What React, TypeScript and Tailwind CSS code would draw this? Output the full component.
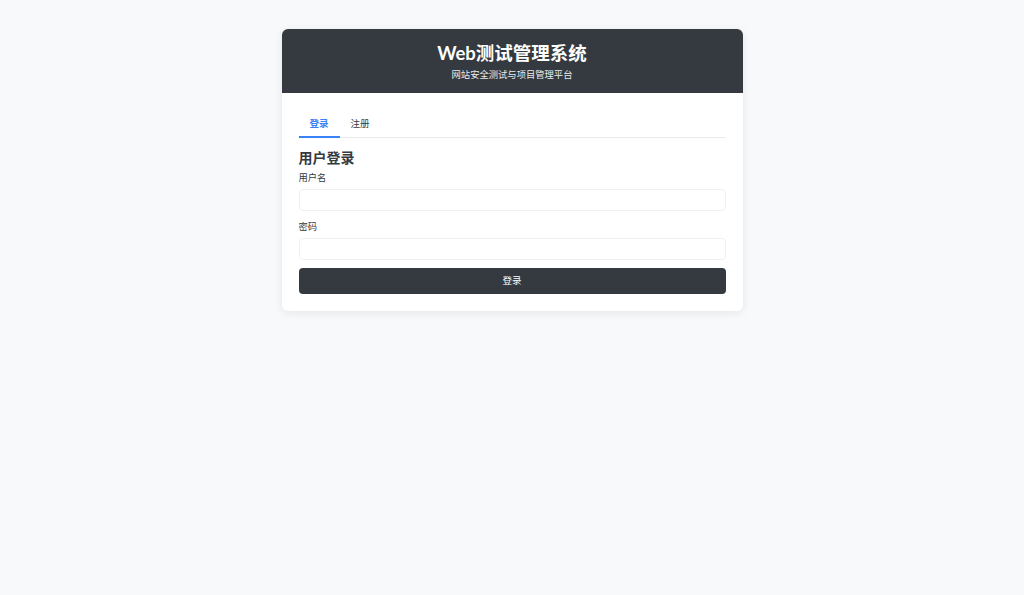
import { useState } from 'react'

export default function App() {
    const [tab, setTab] = useState<'login' | 'register'>('login')

    return (
        <div className="min-h-screen bg-[#f8f9fa] pt-[29px] font-['Lato','Noto_Sans_CJK_SC',sans-serif] text-[#212529]">
            <div className="mx-auto w-[461px] overflow-hidden rounded-[6px] bg-white shadow-[0_2px_10px_rgba(0,0,0,0.08)]">
                {/* header */}
                <div className="bg-[#343a40] pt-[13px] pb-[11px] text-center text-white">
                    <h1 className="text-[18.5px] font-bold leading-[22px]">Web测试管理系统</h1>
                    <p className="mt-[4px] text-[9.3px] leading-[14px] text-[#e9ecef]">网站安全测试与项目管理平台</p>
                </div>

                <div className="px-[17px] pt-[17px] pb-[17px]">
                    {/* tabs */}
                    <div className="flex border-b border-[#e9ecef]">
                        <button
                            onClick={() => setTab('login')}
                            className={`-mb-px h-[28px] border-b-2 px-[11px] pt-[2px] text-[9.5px] ${tab === 'login' ? 'border-[#3b82f6] font-semibold text-[#3b82f6]' : 'border-transparent text-[#343a40]'}`}
                        >
                            登录
                        </button>
                        <button
                            onClick={() => setTab('register')}
                            className={`-mb-px h-[28px] border-b-2 px-[11px] pt-[2px] text-[9.5px] ${tab === 'register' ? 'border-[#3b82f6] font-semibold text-[#3b82f6]' : 'border-transparent text-[#343a40]'}`}
                        >
                            注册
                        </button>
                    </div>

                    <h2 className="mt-[11px] text-[14px] font-semibold leading-[17px] text-[#343a40]">用户登录</h2>

                    <form className="mt-[5px]" onSubmit={e => e.preventDefault()}>
                        <label className="mb-[4px] block text-[9.3px] leading-[14px] text-[#343a40]">用户名</label>
                        <input
                            type="text"
                            className="block h-[22px] w-full rounded-[4px] border border-[#eef0f2] bg-white px-[8px] text-[10px] outline-none"
                        />

                        <label className="mt-[9px] mb-[4px] block text-[9.3px] leading-[14px] text-[#343a40]">密码</label>
                        <input
                            type="password"
                            className="block h-[22px] w-full rounded-[4px] border border-[#eef0f2] bg-white px-[8px] text-[10px] outline-none"
                        />

                        <button
                            type="submit"
                            className="mt-[8px] block h-[26px] w-full rounded-[4px] bg-[#343a40] text-[9.5px] text-white"
                        >
                            登录
                        </button>
                    </form>
                </div>
            </div>
        </div>
    )
}
